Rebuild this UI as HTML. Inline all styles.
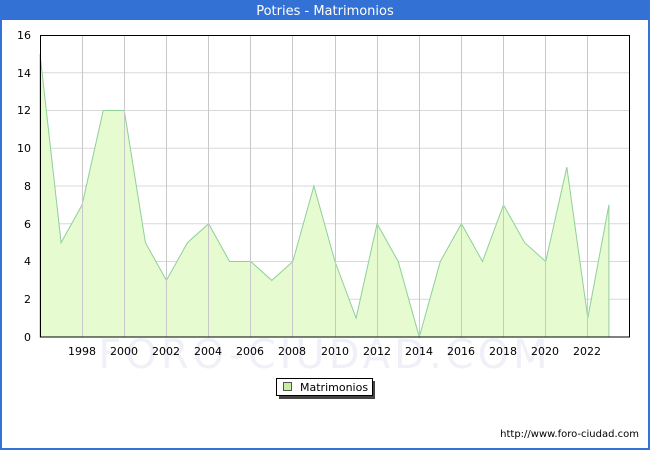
<!DOCTYPE html>
<html><head><meta charset="utf-8"><style>
html,body{margin:0;padding:0;width:650px;height:450px;overflow:hidden;background:#fff}
</style></head><body>
<svg width="650" height="450" xmlns="http://www.w3.org/2000/svg" font-family="'DejaVu Sans', 'Liberation Sans', sans-serif">
<rect x="0" y="0" width="650" height="450" fill="#fff"/>
<rect x="1" y="1" width="648" height="448" fill="none" stroke="#3371d4" stroke-width="2"/>
<rect x="0" y="0" width="650" height="20" fill="#3371d4"/>
<text x="325" y="15" text-anchor="middle" fill="#fff" font-size="13">Potries - Matrimonios</text>
<text x="325" y="368" text-anchor="middle" fill="#f0f0f8" font-size="40" letter-spacing="4">FORO-CIUDAD.COM</text>
<g stroke="#d8d8d8" stroke-width="1">
<line x1="40" y1="299.25" x2="630" y2="299.25"/><line x1="40" y1="261.5" x2="630" y2="261.5"/><line x1="40" y1="223.75" x2="630" y2="223.75"/><line x1="40" y1="186" x2="630" y2="186"/><line x1="40" y1="148.25" x2="630" y2="148.25"/><line x1="40" y1="110.5" x2="630" y2="110.5"/><line x1="40" y1="72.75" x2="630" y2="72.75"/>
</g>
<polygon fill="#e6fcd0" stroke="#8fcf9a" stroke-width="1" points="40,337 40,53.9 61.1,242.6 82.1,204.9 103.2,110.5 124.3,110.5 145.4,242.6 166.4,280.4 187.5,242.6 208.6,223.7 229.6,261.5 250.7,261.5 271.8,280.4 292.8,261.5 313.9,186 335,261.5 356.1,318.1 377.1,223.7 398.2,261.5 419.3,337 440.3,261.5 461.4,223.7 482.5,261.5 503.5,204.9 524.6,242.6 545.7,261.5 566.8,167.1 587.8,318.1 608.9,204.9 608.9,337"/>
<g stroke="#c8c8c8" stroke-width="1">
<line x1="82.5" y1="35" x2="82.5" y2="337"/><line x1="124.5" y1="35" x2="124.5" y2="337"/><line x1="166.5" y1="35" x2="166.5" y2="337"/><line x1="208.5" y1="35" x2="208.5" y2="337"/><line x1="250.5" y1="35" x2="250.5" y2="337"/><line x1="292.5" y1="35" x2="292.5" y2="337"/><line x1="335.5" y1="35" x2="335.5" y2="337"/><line x1="377.5" y1="35" x2="377.5" y2="337"/><line x1="419.5" y1="35" x2="419.5" y2="337"/><line x1="461.5" y1="35" x2="461.5" y2="337"/><line x1="503.5" y1="35" x2="503.5" y2="337"/><line x1="545.5" y1="35" x2="545.5" y2="337"/><line x1="587.5" y1="35" x2="587.5" y2="337"/>
</g>
<rect x="40.5" y="35.5" width="589" height="301.5" fill="none" stroke="#000" stroke-width="1"/>
<g font-size="11" fill="#000" text-anchor="end">
<text x="31" y="341">0</text><text x="31" y="303">2</text><text x="31" y="265">4</text><text x="31" y="228">6</text><text x="31" y="190">8</text><text x="31" y="152">10</text><text x="31" y="114">12</text><text x="31" y="77">14</text><text x="31" y="39">16</text>
</g>
<g font-size="11" fill="#000" text-anchor="middle">
<text x="82" y="355">1998</text><text x="124" y="355">2000</text><text x="166" y="355">2002</text><text x="208" y="355">2004</text><text x="250" y="355">2006</text><text x="292" y="355">2008</text><text x="335" y="355">2010</text><text x="377" y="355">2012</text><text x="419" y="355">2014</text><text x="461" y="355">2016</text><text x="503" y="355">2018</text><text x="545" y="355">2020</text><text x="587" y="355">2022</text>
</g>
<rect x="279" y="381" width="96" height="18" fill="#444"/>
<rect x="276.5" y="378.5" width="96" height="17" fill="#fff" stroke="#000" stroke-width="1"/>
<rect x="283.5" y="382.5" width="8" height="8" fill="#c8f0a0" stroke="#555" stroke-width="1"/>
<text x="300" y="391" font-size="11" fill="#000">Matrimonios</text>
<text x="639" y="437" text-anchor="end" font-size="10" fill="#000">http://www.foro-ciudad.com</text>
</svg>
</body></html>
